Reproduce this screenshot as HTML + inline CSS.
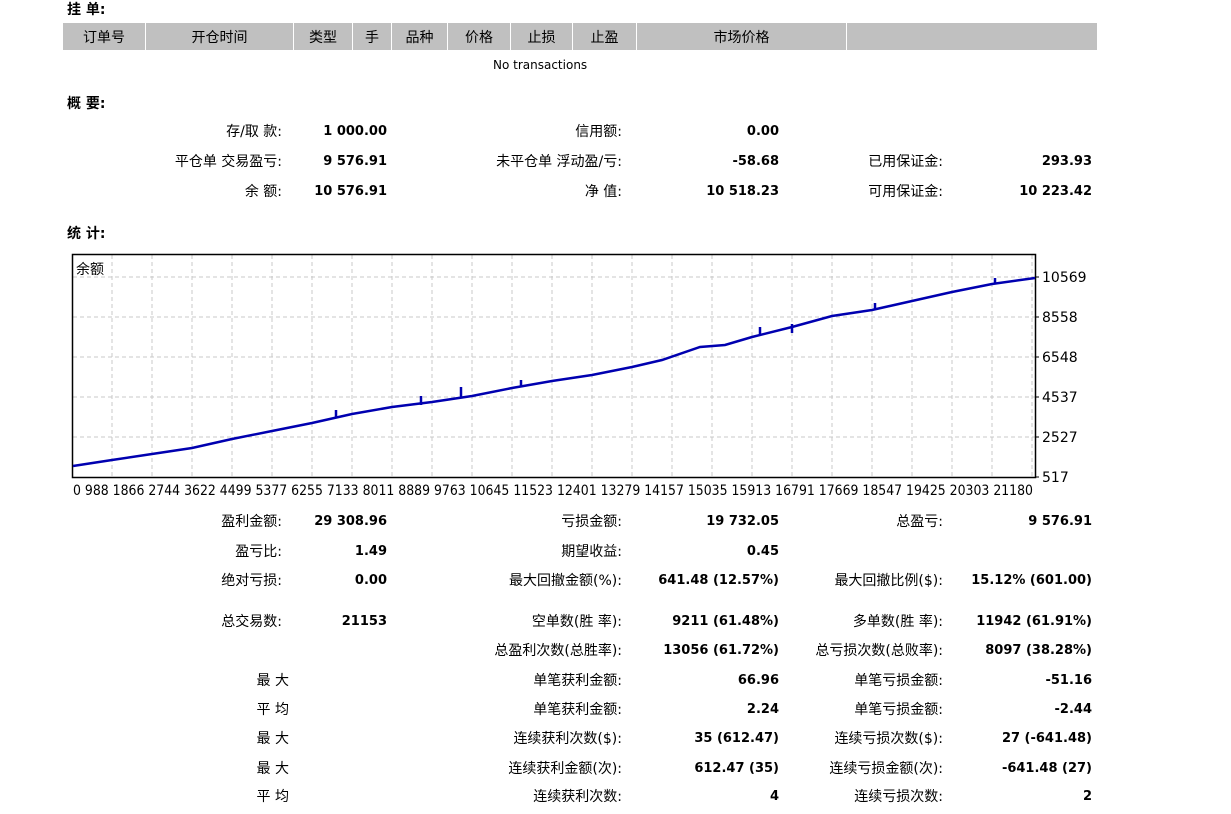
<!DOCTYPE html>
<html><head><meta charset="utf-8"><style>
body{margin:0;width:1231px;height:814px;background:#fff;position:relative;overflow:hidden;font-family:"DejaVu Sans","Noto Sans CJK SC",sans-serif;font-size:13px;color:#000}
.a{position:absolute;white-space:nowrap;line-height:18px}
.r{text-align:right}
.b{font-weight:bold}
.h{position:absolute;top:23px;height:27px;background:#c0c0c0;line-height:29px;text-align:center;font-size:14px;font-family:"Liberation Sans","Noto Sans CJK SC",sans-serif}
</style></head><body>
<div class="a b" style="left:67px;top:1px;font-size:14px">挂 单:</div>
<div class="h" style="left:63px;width:82px">订单号</div>
<div class="h" style="left:146px;width:147px">开仓时间</div>
<div class="h" style="left:294px;width:58px">类型</div>
<div class="h" style="left:353px;width:38px">手</div>
<div class="h" style="left:392px;width:55px">品种</div>
<div class="h" style="left:448px;width:62px">价格</div>
<div class="h" style="left:511px;width:61px">止损</div>
<div class="h" style="left:573px;width:63px">止盈</div>
<div class="h" style="left:637px;width:209px">市场价格</div>
<div class="h" style="left:847px;width:250px"></div>
<div class="a" style="left:493px;top:56px;font-size:12px">No transactions</div>
<div class="a b" style="left:67px;top:95px;font-size:14px">概 要:</div>
<div id="rows"></div>
<div class="a b" style="left:67px;top:225px;font-size:14px">统 计:</div>
<svg class="a" style="left:0;top:0" width="1231" height="814">
<g stroke="#c8c8c8" stroke-dasharray="4,3" stroke-width="1">
<line x1="112" y1="255" x2="112" y2="477"/><line x1="152" y1="255" x2="152" y2="477"/><line x1="192" y1="255" x2="192" y2="477"/><line x1="232" y1="255" x2="232" y2="477"/><line x1="272" y1="255" x2="272" y2="477"/><line x1="312" y1="255" x2="312" y2="477"/><line x1="352" y1="255" x2="352" y2="477"/><line x1="392" y1="255" x2="392" y2="477"/><line x1="432" y1="255" x2="432" y2="477"/><line x1="472" y1="255" x2="472" y2="477"/><line x1="512" y1="255" x2="512" y2="477"/><line x1="552" y1="255" x2="552" y2="477"/><line x1="592" y1="255" x2="592" y2="477"/><line x1="632" y1="255" x2="632" y2="477"/><line x1="672" y1="255" x2="672" y2="477"/><line x1="712" y1="255" x2="712" y2="477"/><line x1="752" y1="255" x2="752" y2="477"/><line x1="792" y1="255" x2="792" y2="477"/><line x1="832" y1="255" x2="832" y2="477"/><line x1="872" y1="255" x2="872" y2="477"/><line x1="912" y1="255" x2="912" y2="477"/><line x1="952" y1="255" x2="952" y2="477"/><line x1="992" y1="255" x2="992" y2="477"/><line x1="1032" y1="255" x2="1032" y2="477"/>
<line x1="73" y1="277" x2="1035" y2="277"/><line x1="73" y1="317" x2="1035" y2="317"/><line x1="73" y1="357" x2="1035" y2="357"/><line x1="73" y1="397" x2="1035" y2="397"/><line x1="73" y1="437" x2="1035" y2="437"/>
</g>
<rect x="72.5" y="254.5" width="963" height="223" fill="none" stroke="#000" stroke-width="1.5"/>
<g stroke="#000"><line x1="1035" y1="277" x2="1039" y2="277"/><line x1="1035" y1="317" x2="1039" y2="317"/><line x1="1035" y1="357" x2="1039" y2="357"/><line x1="1035" y1="397" x2="1039" y2="397"/><line x1="1035" y1="437" x2="1039" y2="437"/><line x1="1035" y1="477" x2="1039" y2="477"/></g>
<polyline fill="none" stroke="#0000b0" stroke-width="2.5" points="73,466 112,460 152,454 192,448 232,439 272,431 312,423 352,414 392,407 432,402 472,396 512,388 552,381 592,375 632,367 662,360 700,347 725,345 752,337 792,327 832,316 872,310 912,301 952,292 992,284 1035,278"/>
<g stroke="#0000b0" stroke-width="2.5"><line x1="336" y1="418" x2="336" y2="410"/><line x1="421" y1="405" x2="421" y2="396"/><line x1="461" y1="398" x2="461" y2="387"/><line x1="521" y1="387" x2="521" y2="380"/><line x1="760" y1="335" x2="760" y2="327"/><line x1="792" y1="333" x2="792" y2="324"/><line x1="875" y1="310" x2="875" y2="303"/><line x1="995" y1="284" x2="995" y2="278"/></g>
<text x="76" y="274" font-size="14" font-family="Liberation Sans,Noto Sans CJK SC,sans-serif">余额</text>
<g font-size="14" font-family="DejaVu Sans,sans-serif"><text x="1042" y="282">10569</text><text x="1042" y="322">8558</text><text x="1042" y="362">6548</text><text x="1042" y="402">4537</text><text x="1042" y="442">2527</text><text x="1042" y="482">517</text>
<text x="73" y="495" textLength="960" lengthAdjust="spacingAndGlyphs">0 988 1866 2744 3622 4499 5377 6255 7133 8011 8889 9763 10645 11523 12401 13279 14157 15035 15913 16791 17669 18547 19425 20303 21180</text></g>
</svg>
<script>
var R=[
[131,["存/取 款:","1 000.00","信用额:","0.00","",""]],
[161,["平仓单 交易盈亏:","9 576.91","未平仓单 浮动盈/亏:","-58.68","已用保证金:","293.93"]],
[191,["余 额:","10 576.91","净 值:","10 518.23","可用保证金:","10 223.42"]],
[521,["盈利金额:","29 308.96","亏损金额:","19 732.05","总盈亏:","9 576.91"]],
[551,["盈亏比:","1.49","期望收益:","0.45","",""]],
[580,["绝对亏损:","0.00","最大回撤金额(%):","641.48 (12.57%)","最大回撤比例($):","15.12% (601.00)"]],
[621,["总交易数:","21153","空单数(胜 率):","9211 (61.48%)","多单数(胜 率):","11942 (61.91%)"]],
[650,["","","总盈利次数(总胜率):","13056 (61.72%)","总亏损次数(总败率):","8097 (38.28%)"]],
[680,["最 大","","单笔获利金额:","66.96","单笔亏损金额:","-51.16"]],
[709,["平 均","","单笔获利金额:","2.24","单笔亏损金额:","-2.44"]],
[738,["最 大","","连续获利次数($):","35 (612.47)","连续亏损次数($):","27 (-641.48)"]],
[768,["最 大","","连续获利金额(次):","612.47 (35)","连续亏损金额(次):","-641.48 (27)"]],
[796,["平 均","","连续获利次数:","4","连续亏损次数:","2"]]];
var E=[282,387,622,779,943,1092],h="";
R.forEach(function(r){r[1].forEach(function(t,i){if(!t)return;var e=E[i];if(i==0&&t.indexOf(":")<0)e=289;
h+='<div class="a r'+(i%2?' b':'')+'" style="right:'+(1231-e)+'px;top:'+(r[0]-8)+'px;font-size:'+(i%2?13:14)+'px">'+t+'</div>';});});
document.getElementById('rows').innerHTML=h;
</script>
</body></html>
